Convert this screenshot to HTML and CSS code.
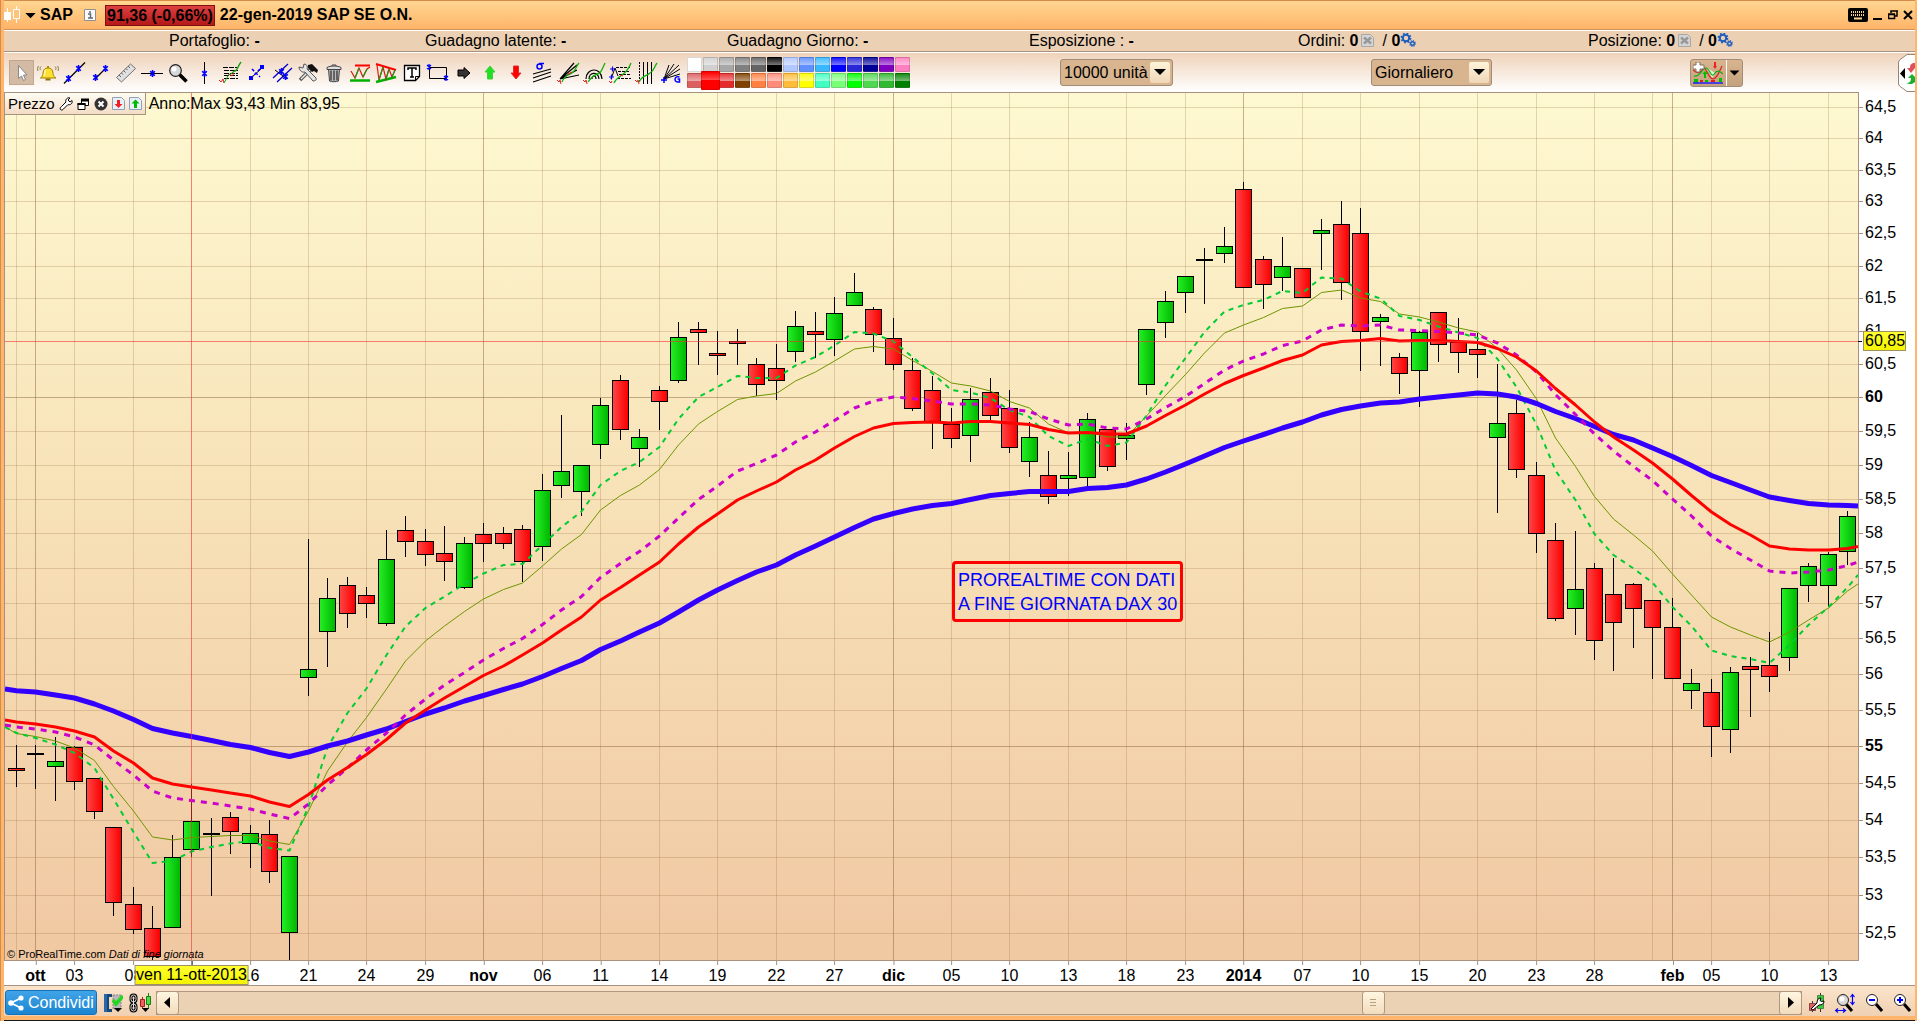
FILE: index.html
```html
<!DOCTYPE html>
<html lang="it">
<head>
    <meta charset="UTF-8">
    <meta name="viewport" content="width=device-width, initial-scale=1.0">
    <title>SAP - ProRealTime</title>
    <link rel="stylesheet" href="styles.css">
</head>
<body>
    <!-- Shared symbols -->
    <svg class="defs" width="0" height="0" aria-hidden="true">
        <symbol id="cross" viewBox="0 0 6 6"><path d="M1 1l4 4M5 1L1 5M3 0v6" stroke="#0000ff" stroke-width="1.3"/></symbol>
        <symbol id="order" viewBox="0 0 13 13"><path d="M.5.5h9l3 3v9H.5z" fill="#d4d4d4" stroke="#a8a8a8"/><path d="M3 3.500l7 6M10 3.500l-7 6" stroke="#989898" stroke-width="2.500"/></symbol>
        <symbol id="gears" viewBox="0 0 16 14"><g fill="none" stroke="#1c5cc0"><circle cx="6" cy="5" r="3.2" stroke-width="2"/><circle cx="6" cy="5" r="4.6" stroke-width="1.6" stroke-dasharray="1.8 1.8"/><circle cx="12.500" cy="10.500" r="1.800" stroke-width="1.4"/><circle cx="12.500" cy="10.500" r="2.800" stroke-width="1.2" stroke-dasharray="1.1 1.100"/></g></symbol>
        <symbol id="down" viewBox="0 0 12 8"><path d="M0 1h12L6 7z"/></symbol>
    </svg>

    <header class="titlebar">
        <svg width="17" height="18" viewBox="0 0 17 18"><path d="M3.500 2v14" stroke="#fff"/><path d="M0 6h7v8H0z" fill="#fff"/><path d="M12.500 0v17" stroke="#fff"/><path d="M9.500 3.500h6v9h-6z" fill="#ffc47c" stroke="#fff"/></svg>
        <svg class="menu-arrow" width="11" height="7" viewBox="0 0 12 8"><use href="#down"/></svg>
        <h1>SAP</h1>
        <svg class="info-icon" width="12" height="12" viewBox="0 0 12 12"><path d="M.5.5h11v11H.5z" fill="#fafafa" stroke="#909090"/><path d="M4 5h2.500v4M4 9h5M6 2v2" fill="none" stroke="#606878" stroke-width="1.500"/></svg>
        <span class="quote">91,36 (-0,66%)</span>
        <span class="quote-date">22-gen-2019 SAP SE O.N.</span>
        <div class="window-buttons">
            <button aria-label="Tastiera"><svg width="20" height="14" viewBox="0 0 20 14"><rect width="20" height="14" rx="2"/><path d="M3 4h14M3 7h14" stroke="#ffd08a" stroke-width="2" stroke-dasharray="1 1"/><path d="M6 10.500h8" stroke="#ffd08a" stroke-width="2"/></svg></button>
            <button aria-label="Riduci"><svg width="10" height="14" viewBox="0 0 10 14"><path d="M0 11h9" stroke="#000" stroke-width="2"/></svg></button>
            <button aria-label="Ripristina"><svg width="10" height="14" viewBox="0 0 10 14"><path d="M3 5V3h6v5H7M.5 6.500h6v4h-6zM0 6h7M3 3h7" fill="none" stroke="#000" stroke-width="1.500"/></svg></button>
            <button aria-label="Chiudi"><svg width="10" height="14" viewBox="0 0 10 14"><path d="M1 3l8 8M9 3l-8 8" stroke="#000" stroke-width="2"/></svg></button>
        </div>
    </header>

    <section class="account">
        <div>Portafoglio: <b>-</b></div>
        <div>Guadagno latente: <b>-</b></div>
        <div>Guadagno Giorno: <b>-</b></div>
        <div>Esposizione : <b>-</b></div>
        <div>Ordini: <b>0</b><svg class="cancel" width="13" height="13"><use href="#order"/></svg><span>/</span> <b>0</b><svg width="16" height="14"><use href="#gears"/></svg></div>
        <div>Posizione: <b>0</b><svg class="cancel" width="13" height="13"><use href="#order"/></svg><span>/</span> <b>0</b><svg width="16" height="14"><use href="#gears"/></svg></div>
    </section>

    <div class="toolbar">
        <div class="tools">
            <button class="active" aria-label="Puntatore"><svg viewBox="0 0 24 24"><path d="M8.500 4.500v13l3-2.500 2 4.500 2-1-2-4.500h3.500z" fill="#fff" stroke="#888"/></svg></button>
            <button aria-label="Allarme"><svg viewBox="0 0 24 24"><path d="M4.500 17c3-2 2-4.500 3-7 .6-2 2-3 4.500-3s4 1 4.500 3c1 2.500 0 5 3.500 7z" fill="#ffe030" stroke="#a08000"/><path d="M11 7l2 0V5h-2z" fill="#b09000"/><path d="M9.500 18.500h5" stroke="#907000" stroke-width="2"/><path d="M9.500 9c-1 2-.5 4-1.500 6" stroke="#fff8b0" fill="none" stroke-width="1.500"/><path d="M5 5.500C3.500 7 4 8 4.500 9M2.500 5C1 7 1.500 8.500 2 10M19 5.500c1.500 1.500 1 2.500.5 3.500M21.500 5c1.500 2 1 3.500.5 5" fill="none" stroke="#807840"/></svg></button>
            <button aria-label="Retta"><svg viewBox="0 0 24 24"><path d="M2 22.500L23 1.500" stroke="#000" stroke-width="1.200"/><use href="#cross" x="3" y="14" width="7" height="7"/><use href="#cross" x="13" y="4" width="7" height="7"/></svg></button>
            <button aria-label="Segmento"><svg viewBox="0 0 24 24"><path d="M8 17l9-9" stroke="#000" stroke-width="1.200"/><use href="#cross" x="4" y="13" width="7" height="7"/><use href="#cross" x="14" y="4" width="7" height="7"/></svg></button>
            <button aria-label="Righello"><svg viewBox="0 0 24 24"><path d="M2.500 16.500l14-13.500 5 4.500-14 13.500z" fill="#e0e0e0" stroke="#707070"/><path d="M5 14l2 2M7.500 12l1.500 1.500M9.500 9.500l2 2M12 7.500l1.500 1.500M14 5l2 2" stroke="#606060"/></svg></button>
            <button aria-label="Linea orizzontale"><svg viewBox="0 0 24 24"><path d="M1 12.500h22" stroke="#000"/><use href="#cross" x="9" y="9" width="7" height="7"/></svg></button>
            <button aria-label="Zoom"><svg viewBox="0 0 24 24"><path d="M13.500 13.500l7 7" stroke="#000" stroke-width="3.500"/><circle cx="9.500" cy="9.500" r="5.800" fill="#d8d8d8" stroke="#222" stroke-width="1.200"/><circle cx="8" cy="8" r="2.500" fill="#fff"/></svg></button>
            <button aria-label="Linea verticale"><svg viewBox="0 0 24 24"><path d="M12.500 1v22" stroke="#000"/><use href="#cross" x="9" y="9" width="7" height="7"/></svg></button>
            <button aria-label="Ritracciamenti"><svg viewBox="0 0 24 24"><path d="M5 6.500h14M6 9.500h14M6 12.500h14M6 14.500h14M6 17.500h14" stroke="#000" stroke-dasharray="5 1"/><path d="M12 13c2 1 4-4 5-3 2 0 3-5 6-9" fill="none" stroke="#10a010" stroke-width="1.300"/><path d="M1 19l2 2 2-3 1 4" fill="none" stroke="#e02020"/><path d="M6 22l5-9" stroke="#10a010"/><path d="M11 13l3 2 2-3" fill="none" stroke="#e02020"/></svg></button>
            <button aria-label="Segmento blu"><svg viewBox="0 0 24 24"><path d="M7 17L18 7" stroke="#000"/><path d="M5 15h4v4H5zM16 4h4v4h-4z" fill="#00f"/><path d="M8 8l8 8M16 8l-8 8" stroke="#00f" stroke-width="1.500" stroke-dasharray="3 2"/></svg></button>
            <button aria-label="Canale"><svg viewBox="0 0 24 24"><path d="M3 17L18 3M7 21L22 7" stroke="#00c" stroke-width="1.300"/><path d="M5 9l12 9" stroke="#000"/><use href="#cross" x="8" y="7" width="7" height="7"/><use href="#cross" x="12" y="12" width="7" height="7"/></svg></button>
            <button aria-label="Strumenti"><svg viewBox="0 0 24 24"><path d="M4 19L16 7" stroke="#555" stroke-width="3.500"/><path d="M5 18L16 7" stroke="#eee" stroke-width="1.500"/><path d="M3 6l4 1 1-4c3 0 4 3 3 5l9 9c1 2-1 3-3 3l-8-9C6 12 3 9 3 6z" fill="#e4e4e4" stroke="#555"/><path d="M12 4l4-1 6 6-1 3-3-2-2 1-4-4z" fill="#111"/></svg></button>
            <button aria-label="Elimina"><svg viewBox="0 0 24 24"><path d="M6.500 8h11l-1 12c-2 1-7 1-9 0z" fill="#bbb" stroke="#444"/><path d="M9 9.500v10M12 9.500v10M15 9.500v10" stroke="#333" stroke-width="1.300"/><path d="M5 6.500c3-2 11-2 14 0v2H5z" fill="#ddd" stroke="#444"/><path d="M10 5V4h4v1" fill="none" stroke="#444"/></svg></button>
            <button aria-label="Supporti e resistenze"><svg viewBox="0 0 24 24"><path d="M7 4.500h15" stroke="red" stroke-width="2"/><path d="M2 19.500h20" stroke="#00b000" stroke-width="2.500"/><path d="M3 10l4 7 4-10 4 9 4-8 3-2" fill="none" stroke="#e01818" stroke-width="1.200"/><path d="M7 17l4-10M15 16l4-8" stroke="#10a010" stroke-width="1.200"/></svg></button>
            <button aria-label="Triangolo"><svg viewBox="0 0 24 24"><path d="M2 3l20 6" stroke="red" stroke-width="2"/><path d="M2 21l20-5" stroke="#00b000" stroke-width="2.500"/><path d="M3 4l2 15 4-13 3 12 3-10 3 8 3-7" fill="none" stroke="#e01818" stroke-width="1.200"/><path d="M5 19l4-13M12 18l3-10M18 16l3-7" stroke="#10a010" stroke-width="1.200"/></svg></button>
            <button aria-label="Testo"><svg viewBox="0 0 24 24"><path d="M4.500 4.500h15v11l-4 4h-11z" fill="#fff" stroke="#000" stroke-width="1.300"/><path d="M15.500 19.500v-4h4" fill="none" stroke="#000"/><path d="M8 9V7h8v2M12 7v9M10 16h4" fill="none" stroke="#000" stroke-width="1.500"/></svg></button>
            <button aria-label="Rettangolo"><svg viewBox="0 0 24 24"><path d="M3.500 6.500h17v11h-17z" fill="none" stroke="#000"/><use href="#cross" x="0" y="3" width="6" height="6"/><use href="#cross" x="17" y="14" width="6" height="6"/></svg></button>
            <button aria-label="Freccia"><svg viewBox="0 0 24 24"><path d="M6 9h6V6.500l6 5.500-6 5.500V15H6z" fill="#333" stroke="#000"/></svg></button>
            <button aria-label="Freccia su"><svg viewBox="0 0 24 24"><path d="M12 5l5 6h-2.500v7h-5v-7H7z" fill="#20e020" stroke="#40d040"/></svg></button>
            <button aria-label="Freccia giù"><svg viewBox="0 0 24 24"><path d="M12 18l5-6h-2.500V5h-5v7H7z" fill="red" stroke="#e03030"/></svg></button>
            <button aria-label="Deviazione"><svg viewBox="0 0 24 24"><circle cx="9.500" cy="5.500" r="2.500" fill="none" stroke="#0000ff" stroke-width="1.500"/><path d="M9 2.500h5" stroke="#0000ff" stroke-width="1.500"/><path d="M3 13l18-5M3 17l18-6M3 21l18-6" stroke="#000" stroke-width="1.200"/></svg></button>
            <button aria-label="Ventaglio"><svg viewBox="0 0 24 24"><path d="M4 18L18 2M4 18l17-9M4 18l19-4M4 18l17-14" stroke="#000" stroke-width="1.200"/><path d="M6 21c4-9 7-6 11-10 3-2 3-6 6-9" fill="none" stroke="#10b010" stroke-width="1.300"/><path d="M1 19l2 2 1-2 1 4M12 13l4-2" fill="none" stroke="#e02020"/></svg></button>
            <button aria-label="Archi"><svg viewBox="0 0 24 24"><path d="M4 18c0-11 15-13 16 0M7 18c0-7 9-8 10 0M10 18c0-4 4-4 4 0" fill="none" stroke="#000" stroke-width="1.200"/><path d="M6 21c4-6 8-8 12-9 2-3 3-6 5-10" fill="none" stroke="#10b010" stroke-width="1.300"/><path d="M1 19l2 2 1-2 1 4" fill="none" stroke="#e02020"/></svg></button>
            <button aria-label="Estensioni"><svg viewBox="0 0 24 24"><path d="M8 6.500h14M10 10.500h12M11 13.500h11M9 17.500h14" stroke="#000" stroke-dasharray="3 1"/><path d="M3 18L7 7l3 8" fill="none" stroke="#000"/><path d="M6 22c4-9 12-6 17-20" fill="none" stroke="#10b010" stroke-width="1.300"/><path d="M2 8h5M4.500 5.500v5M1 16h5M3.500 13.500v5" stroke="#00f" stroke-width="1.200"/><path d="M1 20l2 2 1-2M12 14l3 1" fill="none" stroke="#e02020"/></svg></button>
            <button aria-label="Zone temporali"><svg viewBox="0 0 24 24"><path d="M5.500 1v21" stroke="#000" stroke-dasharray="2 1"/><path d="M9.500 1v22M13.500 1v22M17.500 1v22" stroke="#000"/><path d="M5 21c4-8 7-5 11-9 4-2 4-6 7-10" fill="none" stroke="#10b010" stroke-width="1.300"/><path d="M1 19l2 2 1-2 1 4" fill="none" stroke="#e02020"/></svg></button>
            <button aria-label="Gann"><svg viewBox="0 0 24 24"><path d="M4 18L9 4M4 18L14 3M4 18L19 4M4 18L20 8M4 18l16-5" stroke="#000"/><path d="M1 19h6M4 16v6" stroke="#00f" stroke-width="1.500"/><path d="M19.500 16c-5-2-6 5-2 5h2v-3h-2" fill="none" stroke="#00f" stroke-width="1.500"/></svg></button>
        </div>

        <div class="palette" id="palette"></div>

        <span class="combo units">
            <select aria-label="Unità"><option>10000 unità</option></select>
            <svg width="20" height="21" viewBox="-4 -6 20 21"><use href="#down" width="12" height="8"/></svg>
        </span>
        <span class="combo period">
            <select aria-label="Periodo"><option>Giornaliero</option></select>
            <svg width="20" height="21" viewBox="-4 -6 20 21"><use href="#down" width="12" height="8"/></svg>
        </span>
        <button class="indicators" aria-label="Indicatori">
            <svg width="30" height="22" viewBox="0 0 30 22"><path d="M14 6l5 10 3-5z" fill="#d8ffd8"/><path d="M10 5c4 2 6 12 10 12s6-7 9-13M0 8c5 5 9 2 11-3" fill="none" stroke="#e02020" stroke-width="1.200"/><path d="M1 14c6 2 8-8 12-8s5 12 9 5c3-4 5-1 8 1" fill="none" stroke="#10b010" stroke-width="1.200"/><path d="M12 9l3 3h-2v4h-2v-4H9z" fill="#00c000"/><path d="M22 7l-2-3h1V0h2v4h1z" fill="#f02020"/><path d="M1 17h4v4H1zM12 18h3v2h-3zM26 16h3v4h-3z" fill="#00c000"/><path d="M7 18h3v2H7zM18 18h4v2h-4z" fill="#e02020"/><path d="M0 21h30" stroke="#2020ff" stroke-width="1.500"/><path d="M3 0h4v3h4v4H7v3H3V7H0V3h3z" fill="#fff" stroke="#807060"/></svg>
            <svg class="more" width="16" height="26" viewBox="-3 -10 18 28"><use href="#down" width="12" height="8"/></svg>
        </button>
        <button class="side-tab" aria-label="Ordini">
            <svg width="17" height="38" viewBox="0 0 17 38"><path d="M17 .5H9L1.500 6 .5 8v22l1 2L9 37.500h8" fill="#fff" stroke="#988470"/><path d="M7 14v11l-5-5.500z"/><path d="M17 9c-4 0-5 2-5 5H9l4 5 4-5z" fill="#e05060"/><path d="M8 29c4 0 5-2 5-5h-3l4-4 3 3v5c-2 2-5 3-9 1z" fill="#18b030"/></svg>
        </button>
    </div>

    <main class="chart">
        <div class="plot">
            <svg id="plot" class="plot-canvas" preserveAspectRatio="none" viewBox="5 93 1853 867">
                <defs>
                    <linearGradient id="up"><stop offset="0" stop-color="#24ee24"/><stop offset="1" stop-color="#00b800"/></linearGradient>
                    <linearGradient id="dn"><stop offset="0" stop-color="#ff4444"/><stop offset="1" stop-color="#fa0000"/></linearGradient>
                </defs>
            </svg>
            <div class="legend">
                <div class="legend-box">
                    <span>Prezzo</span>
                    <svg width="14" height="14" viewBox="0 0 14 14"><path d="M1.500 12.500c-1-1 0-2 1-3L7 5c-1-2 1-5 4-4L9 3l2 2 2-1.500c1 3-2 5-4 4L4.500 12c-1 1-2 1.500-3 .5z" fill="#fff" stroke="#000"/></svg>
                    <svg width="13" height="14" viewBox="0 0 13 14"><path d="M4.500 2.500h7v6h-7z" fill="#fff" stroke="#000"/><path d="M4 3h8" stroke="#000" stroke-width="3"/><path d="M1 6.500h7v6H1z" fill="#fff" stroke="#000"/><path d="M.5 7h8" stroke="#000" stroke-width="2"/></svg>
                    <svg width="14" height="14" viewBox="0 0 14 14"><circle cx="7" cy="7" r="6.500" fill="#333"/><path d="M4.500 4.500l5 5M9.500 4.500l-5 5" stroke="#fff" stroke-width="2"/></svg>
                    <svg width="13" height="13" viewBox="0 0 13 13"><path d="M.5.5h9l3 3v9H.5z" fill="#e8f0fa" stroke="#90a0b8"/><path d="M6.500 11L2.500 7H5V3h3v4h2.500z" fill="#f02020"/></svg>
                    <svg width="13" height="13" viewBox="0 0 13 13"><path d="M.5.5h9l3 3v9H.5z" fill="#e8f0fa" stroke="#90a0b8"/><path d="M6.500 2.500l4 4H8V11H5V6.500H2.500z" fill="#00b800"/></svg>
                </div>
                <span>Anno:Max 93,43 Min 83,95</span>
            </div>
            <p class="note">PROREALTIME CON DATI<br>A FINE GIORNATA DAX 30</p>
            <p class="credits">© ProRealTime.com <em>Dati di fine giornata</em></p>
        </div>
        <div class="axis-y" id="axisY"></div>
        <div class="axis-x" id="axisX"></div>
    </main>

    <footer class="bottombar">
        <button class="share"><svg width="16" height="16" viewBox="0 0 16 16"><path d="M13 3L3 8l10 5" fill="none" stroke="#fff" stroke-width="1.800"/><g fill="#fff"><circle cx="13" cy="3" r="2.600"/><circle cx="3" cy="8" r="2.800"/><circle cx="13" cy="13" r="2.600"/></g></svg>Condividi</button>
        <div class="chart-tools">
            <button aria-label="Modelli"><svg width="20" height="20" viewBox="0 0 20 20"><path d="M1 1h8v3H6v12h3v3H1z" fill="#184878"/><path d="M1 1h3v18H1z" fill="#2868a8"/><path d="M10 2h8v14h-8z" fill="#b8b8b8" stroke="#888" stroke-dasharray="2 1"/><path d="M10 7l3 4 7-8" fill="none" stroke="#20d820" stroke-width="3.500"/><path d="M11 15h8l-4 4z"/></svg></button>
            <button aria-label="Collega"><svg width="24" height="20" viewBox="0 0 24 20"><g fill="none"><rect x="3" y="2" width="5" height="7" rx="2.500" stroke="#000" stroke-width="3"/><rect x="3" y="11" width="5" height="7" rx="2.500" stroke="#000" stroke-width="3"/><path d="M5.500 6v8" stroke="#000" stroke-width="3"/><rect x="3" y="2" width="5" height="7" rx="2.500" stroke="#ddd"/><rect x="3" y="11" width="5" height="7" rx="2.500" stroke="#ddd"/><path d="M5.500 6v8" stroke="#ddd"/></g><path d="M14.500 4v12" stroke="#a02020"/><path d="M12.500 6.500h4v7h-4z" fill="#f06060" stroke="#a02020"/><path d="M20.500 0v16" stroke="#108010"/><path d="M18.500 3.500h4v8h-4z" fill="#50d850" stroke="#108010"/><path d="M14 15h7l-3.500 4z"/></svg></button>
        </div>
        <div class="scrollbar">
            <button aria-label="Indietro"><svg width="6" height="11" viewBox="0 0 6 11"><path d="M6 0v11L0 5.500z"/></svg></button>
            <span class="before"></span>
            <button aria-label="Scorri"><svg width="6" height="7" viewBox="0 0 6 7"><path d="M0 .5h6M0 3.500h6M0 6.500h6" stroke="#b8a080"/></svg></button>
            <span class="after"></span>
            <button aria-label="Avanti"><svg width="6" height="11" viewBox="0 0 6 11"><path d="M0 0v11l6-5.500z"/></svg></button>
        </div>
        <div class="zoom-tools">
            <button aria-label="Impostazioni"><svg width="16" height="20" viewBox="0 0 16 20"><path d="M11.500 0v19" stroke="#333"/><path d="M8.500 2.500h6v13h-6z" fill="#40c840" stroke="#484"/><path d="M3.500 8v11" stroke="#333"/><path d="M.5 10.500h6v7h-6z" fill="#e06060" stroke="#844"/><path d="M2 16l6-6c0-3 1-5 4-5l-1 2.500 1.500 1L15 8c0 3-2 4-5 4l-6 5z" fill="#fff" stroke="#000"/></svg></button>
            <button aria-label="Adatta"><svg width="20" height="20" viewBox="0 0 20 20"><path d="M11 11l6 7" stroke="#000" stroke-width="3"/><circle cx="8" cy="7" r="5.500" fill="#d8d8d8" stroke="#222"/><circle cx="7" cy="6" r="2.500" fill="#fff"/><path d="M17.500 2v9M15.500 4l2-2.500 2 2.500M15.500 9l2 2.500 2-2.500M1 17.500h9M3 15.500l-2.500 2 2.500 2M8 15.500l2.500 2-2.500 2" fill="none" stroke="#0000ff" stroke-width="1.200"/></svg></button>
            <button aria-label="Zoom indietro"><svg width="18" height="20" viewBox="0 0 18 20"><path d="M11 11l6 7" stroke="#000" stroke-width="3"/><circle cx="7" cy="7" r="5.500" fill="#fff" stroke="#222"/><path d="M4 7h6" stroke="#00f" stroke-width="2"/></svg></button>
            <button aria-label="Zoom avanti"><svg width="18" height="20" viewBox="0 0 18 20"><path d="M11 11l6 7" stroke="#000" stroke-width="3"/><circle cx="7" cy="7" r="5.500" fill="#fff" stroke="#222"/><path d="M4 7h6M7 4v6" stroke="#00f" stroke-width="2"/></svg></button>
        </div>
    </footer>

    <script src="chart.js"></script>
</body>
</html>
```

FILE: styles.css
```css
:root {
    --line: #a8917f;
    --edge: #ffb56b;
    --sand: #ecd0b3;
}

* {
    margin: 0;
    padding: 0;
    box-sizing: border-box;
}

body {
    display: flex;
    flex-direction: column;
    height: 100vh;
    overflow: hidden;
    padding: 0 2px 0 3px;
    border-left: 1px solid #d58c48;
    background-color: var(--edge);
    color: #000;
    font-family: "Liberation Sans", Arial, sans-serif;
    font-size: 16px;
    line-height: 20px;
}

button {
    border: none;
    background: none;
    font: inherit;
    cursor: pointer;
}

svg {
    display: block;
    flex: none;
}

.defs {
    position: absolute;
}

/* Title bar */
.titlebar {
    display: flex;
    align-items: center;
    flex: none;
    height: 30px;
    border-top: 1px solid #d58c48;
    border-bottom: 1px solid #cf935c;
    background: linear-gradient(#ffd691, #ffb469);
    font-weight: bold;
}

.titlebar h1 {
    width: 44px;
    font-size: 16px;
}

.menu-arrow {
    margin: 0 4px;
}

.quote {
    height: 21px;
    margin: 0 5px 0 9px;
    padding: 0 1px;
    border: 1px solid #801010;
    background: linear-gradient(#dc4040, #b41818);
    line-height: 19px;
}

.window-buttons {
    display: flex;
    gap: 5px;
    margin-left: auto;
    padding-right: 2px;
}

/* Account summary */
.account {
    display: grid;
    grid-template-columns: 256fr 302fr 302fr 269fr 290fr 327fr;
    flex: none;
    height: 22px;
    padding-left: 165px;
    border-top: 1px solid #fff;
    border-bottom: 1px solid var(--line);
    background-color: var(--sand);
}

.account div {
    white-space: nowrap;
}

.account svg {
    display: inline-block;
    vertical-align: -1px;
}

.account .cancel {
    margin: 0 8px 0 3px;
}

/* Drawing tools */
.toolbar {
    display: grid;
    grid-template-columns: auto auto 150fr 113px 198fr 121px 198fr 53px 155fr 17px;
    align-items: center;
    flex: none;
    height: 40px;
    padding-left: 5px;
    border-top: 1px solid #fff;
    background: linear-gradient(#efd3ba, #fff);
}

.tools {
    display: flex;
    gap: 1px;
}

.tools button {
    display: grid;
    place-items: center;
    width: 25px;
    height: 25px;
}

.tools svg {
    width: 24px;
    height: 24px;
}

.tools .active {
    border: 1px solid #c0a890;
    background-color: #d2baa4;
}

.palette {
    display: grid;
    grid-template-columns: repeat(14, 15px);
    gap: 1px;
    margin-left: 3px;
}

.palette button {
    height: 15px;
    border: 1px solid rgba(0, 0, 0, 0.15);
    border-radius: 1px;
    background-image: linear-gradient(rgba(255, 255, 255, 0.1), rgba(255, 255, 255, 0.45) 50%, rgba(255, 255, 255, 0) 55%);
}

.palette .selected {
    margin: -2px;
    height: 19px;
    background-image: linear-gradient(rgba(255, 255, 255, 0), rgba(255, 255, 255, 0.3) 45%, rgba(255, 255, 255, 0) 50%);
    z-index: 1;
}

.combo {
    display: grid;
    position: relative;
}

.units {
    grid-column: 4;
}

.period {
    grid-column: 6;
}

.combo select {
    appearance: none;
    width: 100%;
    height: 27px;
    padding: 0 3px;
    border: 1px solid #a08c78;
    border-radius: 3px;
    background-color: #d8b48f;
    color: #000;
    font: inherit;
}

.combo svg {
    position: absolute;
    top: 3px;
    right: 3px;
    border-radius: 2px;
    background: linear-gradient(#fdf4da, #f0d6b8);
    pointer-events: none;
}

.indicators {
    grid-column: 8;
    display: flex;
    align-items: center;
    justify-content: space-between;
    height: 28px;
    padding-left: 2px;
    border: 1px solid #a08c78;
    border-radius: 3px;
    background: linear-gradient(#d8b48f, #c4a27e);
}

.indicators .more {
    border-left: 1px solid #fff;
}

.side-tab {
    grid-column: 10;
}

/* Chart */
.chart {
    display: grid;
    grid-template-columns: minmax(0, 1fr) 56px;
    grid-template-rows: minmax(0, 1fr) 24px;
    flex: 1;
    min-height: 0;
    border-bottom: 1px solid var(--line);
    background-color: #fff;
}

.plot {
    position: relative;
    border: 1px solid var(--line);
    background: linear-gradient(#fef9d1, #f7e0b6 50%, #f0c8a2);
}

.plot-canvas {
    width: 100%;
    height: 100%;
}

.grid line {
    stroke: rgba(150, 105, 60, 0.25);
    shape-rendering: crispEdges;
}

.grid .major {
    stroke: rgba(130, 90, 50, 0.45);
}

.candles {
    shape-rendering: crispEdges;
}

.crosshair line {
    stroke: rgba(240, 50, 50, 0.6);
    shape-rendering: crispEdges;
}

.average {
    fill: none;
    stroke-linejoin: round;
}

.slow { stroke: #3300ff; stroke-width: 5; }
.medium { stroke: #ff0000; stroke-width: 3; }
.dashed { stroke: #cc00cc; stroke-width: 3; stroke-dasharray: 6 6; }
.fast { stroke: #00cc33; stroke-width: 2; stroke-dasharray: 5 5; }
.thin { stroke: #6e9600; stroke-width: 1; }

.legend {
    position: absolute;
    top: -1px;
    left: -1px;
    display: flex;
    gap: 3px;
    font-size: 15px;
}

.legend > span {
    line-height: 23px;
    font-size: 16px;
}

.legend-box {
    display: flex;
    align-items: center;
    gap: 4px;
    height: 23px;
    padding: 0 3px;
    border: 1px solid var(--line);
    background: linear-gradient(#fffdf4, #f3dcc4);
}

.note {
    position: absolute;
    top: 54%;
    left: 51.1%;
    padding: 4px 3px 3px;
    border: 3px solid #ff0000;
    border-radius: 4px;
    color: #0000ff;
    font-size: 18px;
    line-height: 24px;
    white-space: nowrap;
}

.credits {
    position: absolute;
    bottom: 0;
    left: 2px;
    font-size: 11px;
    line-height: 12px;
}

.axis-y,
.axis-x {
    position: relative;
}

.axis-y {
    margin: 1px 0;
}

.axis-x {
    margin: 0 1px;
}

.axis-y span {
    position: absolute;
    left: 6px;
    transform: translateY(-50%);
}

.axis-y span::before {
    content: "";
    position: absolute;
    top: 10px;
    left: -6px;
    width: 4px;
    border-top: 1px solid var(--line);
}

.axis-x span {
    position: absolute;
    top: 5px;
    transform: translateX(-50%);
    white-space: nowrap;
}

.axis-x span::before {
    content: "";
    position: absolute;
    top: -5px;
    left: 50%;
    height: 4px;
    border-left: 1px solid var(--line);
}

.axis-x .major,
.axis-y .major {
    font-weight: bold;
}

.axis-x .tag,
.axis-y .tag {
    border: 1px solid #a09060;
    background: linear-gradient(#ffff30, #f4f400);
    line-height: 18px;
}

.axis-x .tag {
    top: 4px;
    padding: 0 1px;
}

.axis-y .tag {
    left: 4px;
    padding-left: 1px;
}

.axis-x .tag::before {
    border-color: #000;
}

.axis-y .tag::before {
    top: 9px;
    border-color: #000;
}

/* Bottom bar */
.bottombar {
    display: flex;
    align-items: center;
    flex: none;
    height: 35px;
    padding: 3px 4px 4px 1px;
    border-bottom: 1px solid #181818;
    background: linear-gradient(#fbe4cb, #efd0b2 30px, var(--edge) 30px);
}

.share {
    display: flex;
    align-items: center;
    gap: 4px;
    height: 25px;
    padding: 0 2px;
    border: 1px solid #1470b8;
    border-radius: 3px;
    background: linear-gradient(#40a4e8, #1c84d0);
    color: #fff;
}

.chart-tools {
    display: flex;
    gap: 5px;
    margin: 0 4px 0 6px;
}

.zoom-tools {
    display: flex;
    gap: 10px;
    margin-left: 7px;
}

.scrollbar {
    display: flex;
    flex: 1;
    height: 24px;
    border: 1px solid #b09880;
    background-color: #ecd2b4;
}

.scrollbar button {
    display: grid;
    place-items: center;
    width: 23px;
    margin: -1px;
    border: 1px solid #b09880;
    border-radius: 3px;
    background: linear-gradient(#fff6e0, #f2dcbe);
}

.before {
    flex: 1181;
}

.after {
    flex: 395;
}
```

FILE: chart.js
```js
// Drawing space: x 5-1858, y 93-960; prices are on a logarithmic scale
const LEFT = 5, TOP = 93, WIDTH = 1853, HEIGHT = 867;
const SVG = 'http://www.w3.org/2000/svg';
const plot = document.getElementById('plot');

const candleX = i => Math.floor(16.22 + 19.485 * i);
const priceY = p => Math.floor(107.5 + 4012.6 * Math.log(64.5 / p));

// type, high, body top, body bottom, low
const candles = `
r 745 768 771 787|k 745 753 755 789|g 737 761 767 801|r 746 747 782 790|r 778 778 812 819
r 827 827 903 916|r 887 904 930 934|r 906 928 957 960|g 835 857 928 928|g 784 821 850 857
k 818 833 835 896|r 812 817 832 854|g 825 833 844 868|r 820 834 872 883|g 856 856 933 960
g 539 669 678 696|g 578 598 632 667|r 577 585 614 628|r 587 595 604 618|g 530 559 624 626
r 516 530 542 557|r 529 541 555 566|r 526 553 562 581|g 537 543 588 589|r 523 534 544 562
r 527 533 544 549|r 525 529 562 582|g 474 490 547 561|g 415 471 486 498|g 465 465 492 516
g 398 405 445 459|r 375 380 430 440|g 429 437 449 467|r 386 390 402 430|g 322 337 381 383
r 322 329 333 365|r 331 353 356 375|r 329 341 344 365|r 358 364 385 396|r 344 368 381 400
g 311 326 352 362|r 312 331 335 358|g 297 313 340 356|g 273 292 306 306|r 307 309 335 352
r 318 338 365 370|r 358 370 409 411|r 376 390 422 449|r 408 424 439 448|g 388 399 436 462
r 378 392 416 421|r 390 408 448 453|g 422 437 462 477|r 451 475 497 504|g 452 475 479 496
g 413 419 478 487|r 429 429 467 471|g 423 435 439 460|g 329 329 385 395|g 291 301 323 338
g 276 276 293 313|k 248 259 261 304|g 227 246 254 263|r 182 189 288 288|r 256 259 285 309
g 237 266 278 291|r 268 268 298 298|g 219 230 234 270|r 201 224 283 300|r 208 233 332 371
g 314 317 322 366|r 353 357 374 394|g 331 332 371 407|r 312 312 345 362|r 318 342 353 373
r 333 349 355 378|g 364 423 438 513|r 400 413 470 478|r 462 475 534 553|r 523 540 619 621
g 531 589 609 635|r 563 568 641 660|r 558 594 623 671|r 583 584 609 648|r 600 600 628 679
r 598 627 679 679|g 669 683 691 709|r 679 692 727 757|g 667 672 730 753|r 657 666 670 717
r 632 665 677 692|g 588 588 658 671|g 563 566 586 602|g 552 554 586 607|g 511 516 552 565
`.trim().split(/[|\n]/).map(row => row.split(' '));

// One value at the left edge, one per candle, one at the right edge
const averages = {
    thin: [727, 733.5, 736.5, 741, 748, 760.5, 786.5, 811, 837, 840, 837.5, 836.5, 835.5, 835.5, 841, 844.5, 811, 771, 742, 717.5, 689, 661, 641, 626, 611.5, 599, 589.5, 583, 566, 549, 534.5, 510, 495.5, 485, 469.5, 445, 424, 411.5, 399.5, 396, 393.5, 381, 372, 361, 349, 346.5, 349, 360.5, 371.5, 383, 386, 391, 401.5, 408, 424, 433, 432, 437, 437, 416, 395.5, 374.5, 353, 333, 325, 317.5, 308.5, 306, 292.5, 290, 298, 301.5, 314, 317, 322, 328, 332, 348.5, 370, 399, 438, 466.5, 496.5, 519, 535, 551, 574, 595, 617, 627, 635, 642, 632, 620, 608, 591, 584],
    fast: [727, 733, 738, 744.5, 753, 768, 799, 832, 863, 861, 851.5, 847, 843.5, 841, 848, 850.5, 806.5, 747.5, 713, 688.5, 655, 626.5, 608, 596.5, 584, 573.5, 565, 564, 545, 527, 511.5, 485, 471, 462, 447, 419, 397, 387, 376, 378, 378, 365.5, 357, 345.5, 332, 333.5, 341.5, 357, 373.5, 390, 392.5, 398, 410, 417, 436, 446, 439, 446, 442.5, 415.5, 385.5, 358, 332, 311.5, 305, 300, 291, 293, 277.5, 278.5, 291.5, 298.5, 316, 320, 326.5, 332.5, 338, 359, 387, 424.5, 470.5, 500, 534, 555, 568.5, 582.5, 607, 626, 650.5, 656, 659, 663, 645, 625, 607, 587.5, 575],
    slow: [689, 690.7, 692, 695, 698, 704, 711, 719.5, 728.5, 733, 736.5, 740.5, 744.5, 747.5, 752.5, 756.5, 752, 746, 741, 735, 729, 721.5, 714, 708, 701, 695.5, 689.5, 684, 676.5, 668.5, 660.5, 649.5, 641, 632, 623, 612, 600, 590, 580.5, 572, 565, 555, 546, 537, 527.5, 519, 513.5, 509, 505.5, 503.5, 499.5, 495.5, 493.5, 491.5, 491.5, 491.5, 488.5, 487.5, 485, 479, 472, 464, 456, 447.5, 441, 434.5, 428, 422, 415, 409.5, 406, 403, 402, 399, 397, 395, 393, 394, 397, 403.5, 411.5, 418.5, 426.5, 434.5, 440, 448, 456.5, 465.5, 475.5, 482.5, 490, 497, 500.5, 503.5, 505, 505.5, 506],
    dashed: [725, 727, 729, 732, 737, 745, 760, 775, 791, 798, 800.5, 803, 806, 809, 814, 818.5, 804, 785, 768, 750, 733, 715, 699, 685, 672.5, 660, 648.5, 638.5, 624.5, 610, 596.5, 577.5, 563.5, 551.5, 536, 518, 499.5, 486, 471, 463.5, 455, 442, 432, 420.5, 408, 401, 397, 398.5, 401, 404, 404, 405, 409, 411.5, 419, 425, 424, 428, 429, 419, 407.5, 396.5, 383.5, 370, 361, 354, 345.5, 341, 330, 325, 326, 325, 330, 330.5, 331.5, 333, 335, 343, 355, 372, 394.5, 414.5, 434, 451, 466.5, 480.5, 499, 516, 536, 548.5, 560, 571, 573, 572, 570, 565.5, 562],
    medium: [720, 722, 724, 727, 731, 737, 751, 763, 778, 784, 787, 790, 793, 796, 802, 806.5, 794.5, 780, 767.5, 754.5, 739.5, 723, 710, 698, 686.5, 675.5, 666, 655, 643, 630, 617, 600, 587.5, 575, 562, 544, 527, 514, 500, 491, 482, 470, 460, 448, 436.5, 428, 423.5, 422.5, 422, 423, 421.5, 421.5, 423, 424.5, 429.5, 433, 432.5, 434, 434, 426, 415.5, 405, 394, 383.5, 375.5, 368, 360.5, 355, 345, 341.5, 340.5, 338.5, 341, 340.5, 340.5, 341.5, 342.5, 348.5, 357, 371, 388.5, 405, 422, 437, 450, 463, 479, 495.5, 512, 524.5, 535, 546, 549, 550, 550, 548.5, 546.5]
};

// candle index, label
const dates = [
    [0, ''], [1, 'ott'], [3, '03'], [6, '08'], [12, '16'], [15, '21'], [18, '24'], [21, '29'],
    [24, 'nov'], [27, '06'], [30, '11'], [33, '14'], [36, '19'], [39, '22'], [42, '27'],
    [45, 'dic'], [48, '05'], [51, '10'], [54, '13'], [57, '18'], [60, '23'],
    [63, '2014'], [66, '07'], [69, '10'], [72, '15'], [75, '20'], [78, '23'], [81, '28'], [84, ''],
    [85, 'feb'], [87, '05'], [90, '10'], [93, '13']
];
const isMajorDate = label => label.length > 2;

const swatches = [
    '#ffffff', '#d0d0d0', '#a8a8a8', '#808080', '#646464', '#000000', '#b0c8ff', '#6090ff', '#38b8ff', '#0000ff', '#2828d8', '#000098', '#8000c0', '#ff80c0',
    '#dc6060', '#ff0000', '#e42c2c', '#804000', '#ff8040', '#ff8c78', '#ffbc38', '#ffff00', '#40ffc0', '#78ff78', '#00ff00', '#50d850', '#30b830', '#008000'
];

function draw(parent, tag, attrs) {
    const el = document.createElementNS(SVG, tag);
    for (const name in attrs) el.setAttribute(name, attrs[name]);
    parent.appendChild(el);
    return el;
}

function drawV(parent, x, cls) {
    draw(parent, 'line', { x1: x + 0.5, x2: x + 0.5, y1: TOP, y2: TOP + HEIGHT, class: cls });
}

function drawH(parent, y, cls) {
    draw(parent, 'line', { x1: LEFT, x2: LEFT + WIDTH, y1: y + 0.5, y2: y + 0.5, class: cls });
}

function addLabel(axis, text, side, percent, cls) {
    const span = document.createElement('span');
    span.textContent = text;
    span.className = cls;
    span.style[side] = percent + '%';
    axis.appendChild(span);
}

const axisX = document.getElementById('axisX');
const axisY = document.getElementById('axisY');

const labelX = (i, text, cls) => addLabel(axisX, text, 'left', (candleX(i) + 0.5 - LEFT) / WIDTH * 100, cls);
const labelY = (p, text, cls) => addLabel(axisY, text, 'top', (priceY(p) - TOP) / HEIGHT * 100, cls);

// Grid and axis labels
const grid = draw(plot, 'g', { class: 'grid' });
dates.forEach(([i, text]) => {
    const cls = isMajorDate(text) ? 'major' : '';
    drawV(grid, candleX(i), cls);
    if (text) labelX(i, text, cls);
});
for (let p = 64.5; p >= 52.5; p -= 0.5) {
    const cls = p % 5 === 0 ? 'major' : '';
    drawH(grid, priceY(p), cls);
    labelY(p, String(p).replace('.', ','), cls);
}
labelX(9, 'ven 11-ott-2013', 'tag');
labelY(60.85, '60,85', 'tag');

// Candles
const candleLayer = draw(plot, 'g', { class: 'candles' });
candles.forEach(([type, high, top, bottom, low], i) => {
    const x = candleX(i);
    draw(candleLayer, 'rect', { x: x, y: high, width: 1, height: low - high });
    draw(candleLayer, 'rect', { x: x - 8, y: top, width: 17, height: bottom - top });
    if (type !== 'k') {
        draw(candleLayer, 'rect', {
            x: x - 7, y: +top + 1, width: 15, height: bottom - top - 2,
            fill: type === 'g' ? 'url(#up)' : 'url(#dn)'
        });
    }
});

// Moving averages
for (const name in averages) {
    const values = averages[name];
    const points = values.map((y, n) => {
        const x = n === 0 ? LEFT : n === values.length - 1 ? LEFT + WIDTH : candleX(n - 1) + 0.5;
        return x + ',' + y;
    });
    draw(plot, 'polyline', { class: 'average ' + name, points: points.join(' ') });
}

const crosshair = draw(plot, 'g', { class: 'crosshair' });
drawV(crosshair, candleX(9));
drawH(crosshair, priceY(60.85));

// Colour palette
const palette = document.getElementById('palette');
swatches.forEach(color => {
    const button = document.createElement('button');
    button.style.backgroundColor = color;
    button.setAttribute('aria-label', color);
    if (color === '#ff0000') button.className = 'selected';
    palette.appendChild(button);
});
```
